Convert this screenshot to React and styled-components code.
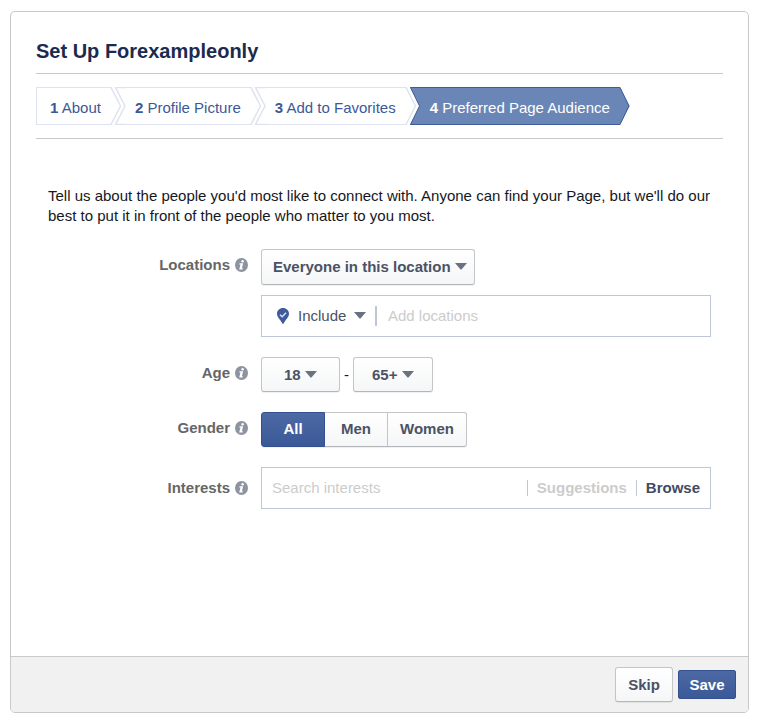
import { Fragment, useState } from 'react';
import styled, { createGlobalStyle, css } from 'styled-components';

const STEPS = ['About', 'Profile Picture', 'Add to Favorites', 'Preferred Page Audience'];
const CURRENT_STEP = 3;
const GENDERS = ['All', 'Men', 'Women'];
const MIN_AGES = ['18', '21', '25', '35', '45', '55'];
const MAX_AGES = ['65+', '55', '45', '35', '25'];

export default function App() {
  const [gender, setGender] = useState('All');

  return (
    <>
      <GlobalStyle />
      <Panel>
        <Main>
          <Title>Set Up Forexampleonly</Title>
          <Steps>
            {STEPS.map((label, i) => (
              <Fragment key={label}>
                <Step $first={i === 0} $active={i === CURRENT_STEP}>
                  <a href={`#step-${i + 1}`}>
                    <b>{i + 1}</b> {label}
                  </a>
                </Step>
                <StepEdge
                  next={i + 1 === CURRENT_STEP}
                  last={i === CURRENT_STEP}
                />
              </Fragment>
            ))}
          </Steps>

          <Audience>
            <Intro>
              Tell us about the people you'd most like to connect with. Anyone can find your Page,
              but we'll do our best to put it in front of the people who matter to you most.
            </Intro>

            <Row>
              <Label htmlFor="scope">
                Locations <InfoIcon />
              </Label>
              <Stack>
                <SelectBox $width={214} $height={36} $left={11} $right={8}>
                  <select id="scope">
                    <option>Everyone in this location</option>
                    <option>People who live in this location</option>
                  </select>
                  <Caret />
                </SelectBox>
                <TextField>
                  <PinIcon />
                  <PlainSelect>
                    <select aria-label="Include or exclude">
                      <option>Include</option>
                      <option>Exclude</option>
                    </select>
                    <Caret />
                  </PlainSelect>
                  <Divider $thick />
                  <input aria-label="Locations" placeholder="Add locations" />
                </TextField>
              </Stack>
            </Row>

            <Row>
              <Label htmlFor="age-min">
                Age <InfoIcon />
              </Label>
              <Ages>
                <SelectBox $width={79} $height={35} $left={22} $right={23}>
                  <select id="age-min">
                    {MIN_AGES.map((age) => (
                      <option key={age}>{age}</option>
                    ))}
                  </select>
                  <Caret />
                </SelectBox>
                <span>-</span>
                <SelectBox $width={80} $height={35} $left={18} $right={19}>
                  <select aria-label="Maximum age">
                    {MAX_AGES.map((age) => (
                      <option key={age}>{age}</option>
                    ))}
                  </select>
                  <Caret />
                </SelectBox>
              </Ages>
            </Row>

            <Row>
              <Label as="span" id="gender-label">
                Gender <InfoIcon />
              </Label>
              <Segments role="radiogroup" aria-labelledby="gender-label">
                {GENDERS.map((name) => (
                  <Segment key={name} $active={gender === name}>
                    <input
                      type="radio"
                      name="gender"
                      checked={gender === name}
                      onChange={() => setGender(name)}
                    />
                    {name}
                  </Segment>
                ))}
              </Segments>
            </Row>

            <Row>
              <Label htmlFor="interests" $tall>
                Interests <InfoIcon />
              </Label>
              <TextField>
                <input id="interests" placeholder="Search interests" />
                <Divider />
                <TextButton type="button" $muted>
                  Suggestions
                </TextButton>
                <Divider />
                <TextButton type="button">Browse</TextButton>
              </TextField>
            </Row>
          </Audience>
        </Main>

        <Footer>
          <SkipButton type="button">Skip</SkipButton>
          <SaveButton type="button">Save</SaveButton>
        </Footer>
      </Panel>
    </>
  );
}

// Right edge of a step: the arrow tip plus the notch of the step after it
function StepEdge({ next, last }) {
  if (last) {
    return (
      <Edge width="11" height="38" viewBox="0 0 11 38" aria-hidden="true">
        <path d="M0 0H1L10.500 19L1 38H0Z" fill="#6a86b6" />
        <path d="M0 .5H1L10 19L1 37.500H0" fill="none" stroke="#3f5d9b" />
      </Edge>
    );
  }
  return (
    <Edge width="16" height="38" viewBox="0 0 16 38" aria-hidden="true">
      <path d="M0 .5H1L10.500 19L1 37.500H0" fill="none" stroke="#dfe3ef" strokeWidth="1.500" />
      {next ? (
        <>
          <path d="M5 0H16V38H5L14.500 19Z" fill="#6a86b6" />
          <path d="M16 .5H5.500L14.500 19L5.500 37.500H16" fill="none" stroke="#3f5d9b" />
        </>
      ) : (
        <path
          d="M16 .5H5.500L15 19L5.500 37.500H16"
          fill="none"
          stroke="#dfe3ef"
          strokeWidth="1.500"
        />
      )}
    </Edge>
  );
}

function InfoIcon() {
  return (
    <svg width="13" height="14" viewBox="0 0 13 14" aria-hidden="true">
      <ellipse cx="6.500" cy="7" rx="6.500" ry="7" fill="#8d93a1" />
      <circle cx="7.600" cy="3.300" r="1.200" fill="#fff" />
      <path d="M4.600 5.300H8.100L6.900 10.300H7.900L7.500 11.500H4.200L5.500 6.500H4.300Z" fill="#fff" />
    </svg>
  );
}

function PinIcon() {
  return (
    <svg width="12" height="16" viewBox="0 0 12 16" aria-hidden="true">
      <path
        d="M6 0C2.600 0 0 2.500 0 5.800C0 9.300 3.500 11.500 5.200 15.300Q6 16.600 6.800 15.300C8.500 11.500 12 9.300 12 5.800C12 2.500 9.400 0 6 0Z"
        fill="#3f5b9b"
      />
      <path d="M3 6.700L5.200 8.800L9 4.800" fill="none" stroke="#d9e1f2" strokeWidth="1.500" />
    </svg>
  );
}

function Caret() {
  return (
    <CaretIcon width="12" height="7" viewBox="0 0 12 7" aria-hidden="true">
      <path d="M0 0H12L6.500 6.500H5.500Z" fill="#6a7180" />
    </CaretIcon>
  );
}

const GlobalStyle = createGlobalStyle`
  * {
    box-sizing: border-box;
  }

  body {
    margin: 0;
    background: #fff;
    color: #141823;
    font: 15px/20px 'Liberation Sans', Arial, sans-serif;
  }

  button, input, select {
    font: inherit;
    color: inherit;
  }
`;

const Panel = styled.div`
  display: flex;
  flex-direction: column;
  min-height: calc(100vh - 20px);
  margin: 11px 10px 9px;
  border: 1px solid #c8c9cb;
  border-radius: 5px;
  overflow: hidden;
`;

const Main = styled.main`
  flex: 1;
  padding: 27px 25px;
`;

const Title = styled.h1`
  margin: 0;
  padding-bottom: 10px;
  border-bottom: 1px solid #c8c9cb;
  color: #1d2a4d;
  font-size: 20px;
  line-height: 24px;
`;

// Step bar
const Steps = styled.ol`
  display: flex;
  margin: 0;
  padding: 13px 0;
  border-bottom: 1px solid #c8c9cb;
  list-style: none;
`;

const Step = styled.li`
  height: 38px;
  padding: 0 9px;
  border: 0 solid #dfe3ef;
  border-width: 1px 0;
  line-height: 40px;
  white-space: nowrap;

  a {
    color: #3b5998;
    text-decoration: none;
  }

  ${({ $first }) =>
    $first &&
    css`
      padding-left: 13px;
      border-left-width: 1px;
    `}

  ${({ $active }) =>
    $active &&
    css`
      border-color: #3f5d9b;
      background: #6a86b6;

      a {
        color: #fff;
      }
    `}
`;

const Edge = styled.svg`
  flex: none;
`;

// Form
const Audience = styled.form`
  display: flex;
  flex-direction: column;
  gap: 20px;
  padding: 47px 12px 0;
`;

const Intro = styled.p`
  margin: 0 0 3px;
`;

const Row = styled.div`
  display: grid;
  grid-template-columns: 200px 1fr;
  column-gap: 13px;
`;

const Label = styled.label`
  display: flex;
  align-items: center;
  align-self: start;
  justify-content: flex-end;
  gap: 5px;
  height: ${({ $tall }) => ($tall ? 42 : 32)}px;
  color: #666;
  font-weight: bold;
`;

const Stack = styled.div`
  display: flex;
  flex-direction: column;
  gap: 10px;
`;

const raised = css`
  border: 1px solid #c4c5c8;
  border-bottom-color: #b4b5b9;
  border-radius: 3px;
  background: linear-gradient(#fff, #f5f6f7);
  box-shadow: 0 1px 1px rgba(0, 0, 0, 0.06);
  color: #4b5265;
  font-weight: bold;
`;

const primary = css`
  border: 1px solid #345090;
  background: linear-gradient(#4d69a4, #3b5998);
  color: #fff;
`;

const CaretIcon = styled.svg`
  position: absolute;
  top: 50%;
  right: 0;
  margin-top: -4px;
  pointer-events: none;
`;

const SelectBox = styled.div`
  position: relative;
  width: ${({ $width }) => $width}px;

  select {
    ${raised};
    display: block;
    width: 100%;
    height: ${({ $height }) => $height}px;
    padding: 0 0 0 ${({ $left }) => $left}px;
    appearance: none;
  }

  ${CaretIcon} {
    right: ${({ $right }) => $right}px;
  }
`;

const PlainSelect = styled.div`
  position: relative;
  width: 68px;
  margin: 0 9px;

  select {
    display: block;
    width: 100%;
    padding: 0;
    border: 0;
    background: none;
    color: #4b5265;
    appearance: none;
  }
`;

const TextField = styled.div`
  display: flex;
  align-items: center;
  height: 42px;
  padding: 0 10px;
  border: 1px solid #bdc7d8;

  > svg {
    flex: none;
    margin-left: 5px;
  }

  input {
    flex: 1;
    min-width: 0;
    padding: 0;
    border: 0;
    outline: 0;
    background: none;
  }

  input::placeholder {
    color: #ccc;
    opacity: 1;
  }
`;

const Divider = styled.span`
  width: ${({ $thick }) => ($thick ? 2 : 1)}px;
  height: ${({ $thick }) => ($thick ? 20 : 16)}px;
  margin-right: ${({ $thick }) => ($thick ? 11 : 9)}px;
  background: #bdc7d8;
`;

const TextButton = styled.button`
  padding: 0;
  border: 0;
  background: none;
  color: ${({ $muted }) => ($muted ? '#ccc' : '#414b62')};
  font-weight: bold;

  &:not(:last-child) {
    margin-right: 9px;
  }
`;

const Ages = styled.div`
  display: flex;
  align-items: center;
  gap: 4px;
`;

const Segments = styled.div`
  display: flex;
  justify-self: start;
`;

const Segment = styled.label`
  ${raised};
  position: relative;
  min-width: 64px;
  height: 35px;
  padding: 0 12px;
  border-radius: 0;
  line-height: 32px;
  text-align: center;
  cursor: pointer;

  & + & {
    margin-left: -1px;
  }

  &:first-child {
    border-radius: 3px 0 0 3px;
  }

  &:last-child {
    border-radius: 0 3px 3px 0;
  }

  input {
    position: absolute;
    opacity: 0;
    pointer-events: none;
  }

  ${({ $active }) =>
    $active &&
    css`
      ${primary};
      z-index: 1;
    `}
`;

const Footer = styled.footer`
  display: flex;
  align-items: center;
  justify-content: flex-end;
  gap: 5px;
  height: 56px;
  padding: 0 12px;
  border-top: 1px solid #c8c9cb;
  background: #f1f1f1;
`;

const SkipButton = styled.button`
  ${raised};
  width: 58px;
  height: 35px;
  padding: 0;
`;

const SaveButton = styled.button`
  ${primary};
  width: 58px;
  height: 29px;
  padding: 0;
  border-radius: 2px;
  font-weight: bold;
`;
